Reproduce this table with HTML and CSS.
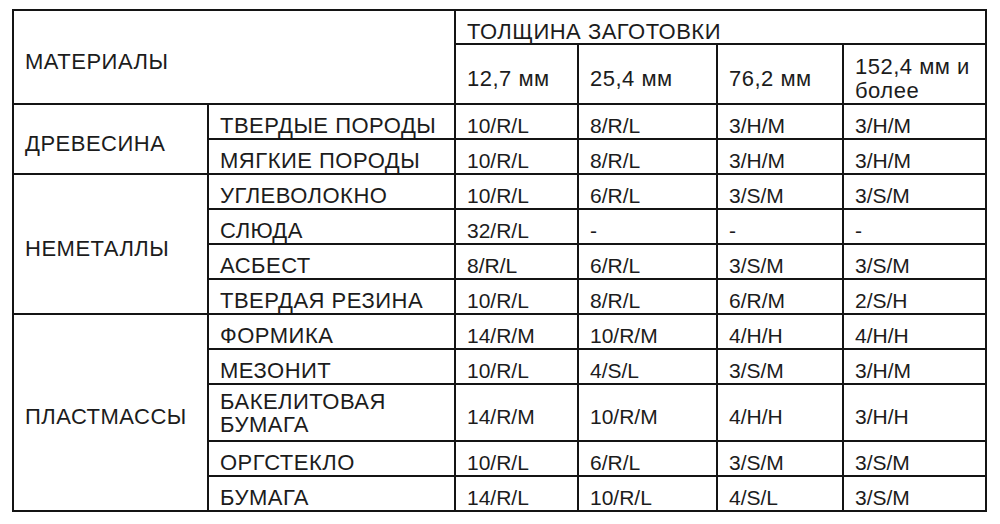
FILE: index.html
```html
<!DOCTYPE html>
<html lang="ru">
<head>
<meta charset="utf-8">
<title>Толщина заготовки</title>
<link rel="stylesheet" href="styles.css">
</head>
<body>
<table class="grid">
  <colgroup>
    <col class="c-group">
    <col class="c-item">
    <col class="c-v1">
    <col class="c-v2">
    <col class="c-v3">
    <col class="c-v4">
  </colgroup>
  <tr class="r-head1">
    <td class="lbl" rowspan="2" colspan="2">МАТЕРИАЛЫ</td>
    <td class="lbl" colspan="4">ТОЛЩИНА ЗАГОТОВКИ</td>
  </tr>
  <tr class="r-head2">
    <td class="lbl">12,7 мм</td>
    <td class="lbl">25,4 мм</td>
    <td class="lbl">76,2 мм</td>
    <td class="lbl two-head">152,4 мм и<br>более</td>
  </tr>
  <tr class="r">
    <td class="lbl" rowspan="2">ДРЕВЕСИНА</td>
    <td class="lbl">ТВЕРДЫЕ ПОРОДЫ</td>
    <td>10/R/L</td><td>8/R/L</td><td>3/H/M</td><td>3/H/M</td>
  </tr>
  <tr class="r">
    <td class="lbl">МЯГКИЕ ПОРОДЫ</td>
    <td>10/R/L</td><td>8/R/L</td><td>3/H/M</td><td>3/H/M</td>
  </tr>
  <tr class="r">
    <td class="lbl" rowspan="4">НЕМЕТАЛЛЫ</td>
    <td class="lbl">УГЛЕВОЛОКНО</td>
    <td>10/R/L</td><td>6/R/L</td><td>3/S/M</td><td>3/S/M</td>
  </tr>
  <tr class="r">
    <td class="lbl">СЛЮДА</td>
    <td>32/R/L</td><td>-</td><td>-</td><td>-</td>
  </tr>
  <tr class="r">
    <td class="lbl">АСБЕСТ</td>
    <td>8/R/L</td><td>6/R/L</td><td>3/S/M</td><td>3/S/M</td>
  </tr>
  <tr class="r">
    <td class="lbl">ТВЕРДАЯ РЕЗИНА</td>
    <td>10/R/L</td><td>8/R/L</td><td>6/R/M</td><td>2/S/H</td>
  </tr>
  <tr class="r">
    <td class="lbl" rowspan="5">ПЛАСТМАССЫ</td>
    <td class="lbl">ФОРМИКА</td>
    <td>14/R/M</td><td>10/R/M</td><td>4/H/H</td><td>4/H/H</td>
  </tr>
  <tr class="r">
    <td class="lbl">МЕЗОНИТ</td>
    <td>10/R/L</td><td>4/S/L</td><td>3/S/M</td><td>3/H/M</td>
  </tr>
  <tr class="r-tall">
    <td class="lbl two">БАКЕЛИТОВАЯ<br>БУМАГА</td>
    <td>14/R/M</td><td>10/R/M</td><td>4/H/H</td><td>3/H/H</td>
  </tr>
  <tr class="r">
    <td class="lbl">ОРГСТЕКЛО</td>
    <td>10/R/L</td><td>6/R/L</td><td>3/S/M</td><td>3/S/M</td>
  </tr>
  <tr class="r">
    <td class="lbl">БУМАГА</td>
    <td>14/R/L</td><td>10/R/L</td><td>4/S/L</td><td>3/S/M</td>
  </tr>
</table>
</body>
</html>
```

FILE: styles.css
```css
html, body {
  margin: 0;
  padding: 0;
  background: #ffffff;
}

body {
  padding: 9px 0 0 12px;
  font-family: "Liberation Sans", Arial, sans-serif;
  color: #1c1c1c;
}

.grid {
  border-collapse: collapse;
  table-layout: fixed;
  width: 973px;
  font-size: 21px;
  line-height: 23px;
}

.c-group { width: 195px; }
.c-item  { width: 247px; }
.c-v1    { width: 123px; }
.c-v2    { width: 139px; }
.c-v3    { width: 126px; }
.c-v4    { width: 143px; }

.grid td {
  border: 2px solid #141414;
  padding: 8px 4px 0 11px;
  vertical-align: middle;
  text-align: left;
  white-space: nowrap;
}

.grid td.lbl {
  font-size: 22px;
  letter-spacing: 0.5px;
}

.grid td.two {
  padding-top: 1px;
}

.grid td.two-head {
  padding-top: 9px;
  line-height: 24px;
}

.r-head1 { height: 34px; }
.r-head2 { height: 60px; }
.r       { height: 35px; }
.r-tall  { height: 57px; }
```
